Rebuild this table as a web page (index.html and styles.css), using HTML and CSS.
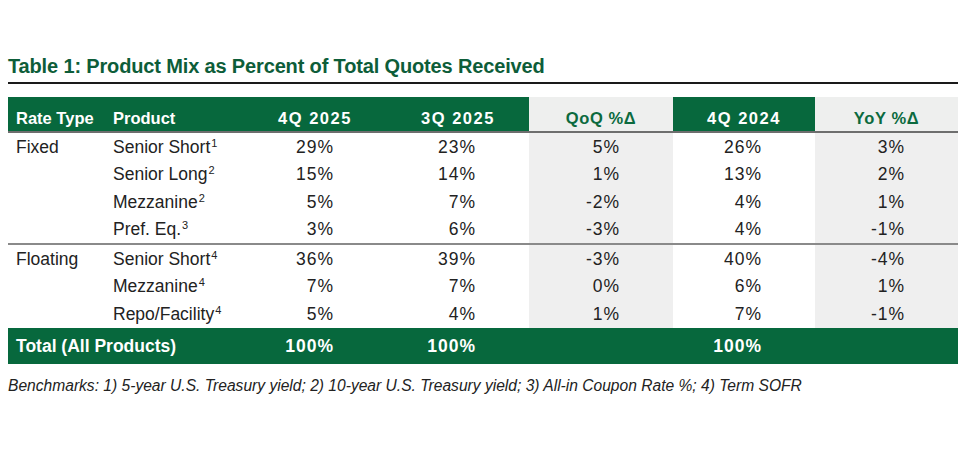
FILE: index.html
```html
<!DOCTYPE html>
<html>
<head>
<meta charset="utf-8">
<link rel="stylesheet" href="styles.css">
</head>
<body>
<div class="page">
  <h1 class="title">Table 1: Product Mix as Percent of Total Quotes Received</h1>
  <div class="rule"></div>
  <table class="mix">
    <colgroup>
      <col class="c-rate"><col class="c-prod"><col class="c-n1"><col class="c-n2"><col class="c-n3"><col class="c-n4"><col class="c-n5">
    </colgroup>
    <thead>
      <tr>
        <th class="txt">Rate Type</th>
        <th class="txt">Product</th>
        <th class="num">4Q 2025</th>
        <th class="num">3Q 2025</th>
        <th class="num alt">QoQ %Δ</th>
        <th class="num">4Q 2024</th>
        <th class="num alt">YoY %Δ</th>
      </tr>
    </thead>
    <tbody>
      <tr>
        <td class="txt">Fixed</td><td class="txt">Senior Short<sup>1</sup></td>
        <td class="val">29%</td><td class="val">23%</td><td class="val alt">5%</td><td class="val">26%</td><td class="val alt">3%</td>
      </tr>
      <tr>
        <td class="txt"></td><td class="txt">Senior Long<sup>2</sup></td>
        <td class="val">15%</td><td class="val">14%</td><td class="val alt">1%</td><td class="val">13%</td><td class="val alt">2%</td>
      </tr>
      <tr>
        <td class="txt"></td><td class="txt">Mezzanine<sup>2</sup></td>
        <td class="val">5%</td><td class="val">7%</td><td class="val alt">-2%</td><td class="val">4%</td><td class="val alt">1%</td>
      </tr>
      <tr class="grp-end">
        <td class="txt"></td><td class="txt">Pref. Eq.<sup>3</sup></td>
        <td class="val">3%</td><td class="val">6%</td><td class="val alt">-3%</td><td class="val">4%</td><td class="val alt">-1%</td>
      </tr>
      <tr>
        <td class="txt">Floating</td><td class="txt">Senior Short<sup>4</sup></td>
        <td class="val">36%</td><td class="val">39%</td><td class="val alt">-3%</td><td class="val">40%</td><td class="val alt">-4%</td>
      </tr>
      <tr>
        <td class="txt"></td><td class="txt">Mezzanine<sup>4</sup></td>
        <td class="val">7%</td><td class="val">7%</td><td class="val alt">0%</td><td class="val">6%</td><td class="val alt">1%</td>
      </tr>
      <tr>
        <td class="txt"></td><td class="txt">Repo/Facility<sup>4</sup></td>
        <td class="val">5%</td><td class="val">4%</td><td class="val alt">1%</td><td class="val">7%</td><td class="val alt">-1%</td>
      </tr>
    </tbody>
    <tfoot>
      <tr>
        <td class="txt" colspan="2">Total (All Products)</td>
        <td class="val">100%</td><td class="val">100%</td><td class="val"></td><td class="val">100%</td><td class="val"></td>
      </tr>
    </tfoot>
  </table>
  <p class="note">Benchmarks: 1) 5-year U.S. Treasury yield; 2) 10-year U.S. Treasury yield; 3) All-in Coupon Rate %; 4) Term SOFR</p>
</div>
</body>
</html>
```

FILE: styles.css
```css
html, body {
  margin: 0;
  padding: 0;
  background: #ffffff;
}

.page {
  padding: 54px 7px 0 8px;
  font-family: "Liberation Sans", Arial, sans-serif;
  color: #222222;
}

.title {
  margin: 0;
  font-size: 20px;
  line-height: 24px;
  font-weight: bold;
  letter-spacing: -0.15px;
  color: #0d5d39;
}

.rule {
  margin-top: 4px;
  height: 2px;
  background: #1a1a1a;
}

.mix {
  margin-top: 13px;
  width: 950px;
  border-collapse: collapse;
  table-layout: fixed;
}

.c-rate { width: 97px; }
.c-prod { width: 138px; }
.c-n1 { width: 144px; }
.c-n2 { width: 142px; }
.c-n3 { width: 144px; }
.c-n4 { width: 142px; }
.c-n5 { width: 143px; }

.mix th, .mix td {
  padding: 0;
  line-height: 20px;
  white-space: nowrap;
}

.mix thead th {
  height: 35px;
  box-sizing: border-box;
  vertical-align: bottom;
  padding-bottom: 3px;
  background: #07683d;
  color: #ffffff;
  font-size: 16.5px;
  font-weight: bold;
  border-bottom: 2px solid #6e6e6e;
}

.mix thead th.txt {
  text-align: left;
  padding-left: 8px;
}

.mix thead th.num {
  text-align: center;
  letter-spacing: 1.5px;
}

.mix thead th.alt {
  background: #eeefee;
  color: #0b6a3e;
  letter-spacing: 0.6px;
}

.mix tbody td {
  height: 27.5px;
  vertical-align: middle;
  font-size: 17.5px;
}

.mix td.txt {
  text-align: left;
  padding-left: 8px;
}

.mix td.val {
  text-align: right;
  padding-right: 53px;
  letter-spacing: 1px;
}

.mix tbody td.alt {
  background: #efefef;
}

.mix tbody tr.grp-end td {
  border-bottom: 2px solid #8a8a8a;
}

.mix sup {
  font-size: 11px;
  line-height: 0;
  vertical-align: 6px;
  letter-spacing: 0;
  margin-left: 1px;
}

.mix tfoot td {
  height: 36px;
  vertical-align: middle;
  background: #07683d;
  color: #ffffff;
  font-size: 17.5px;
  font-weight: bold;
}

.note {
  margin: 12px 0 0 0;
  font-size: 15.6px;
  line-height: 20px;
  font-style: italic;
  color: #222222;
}
```
